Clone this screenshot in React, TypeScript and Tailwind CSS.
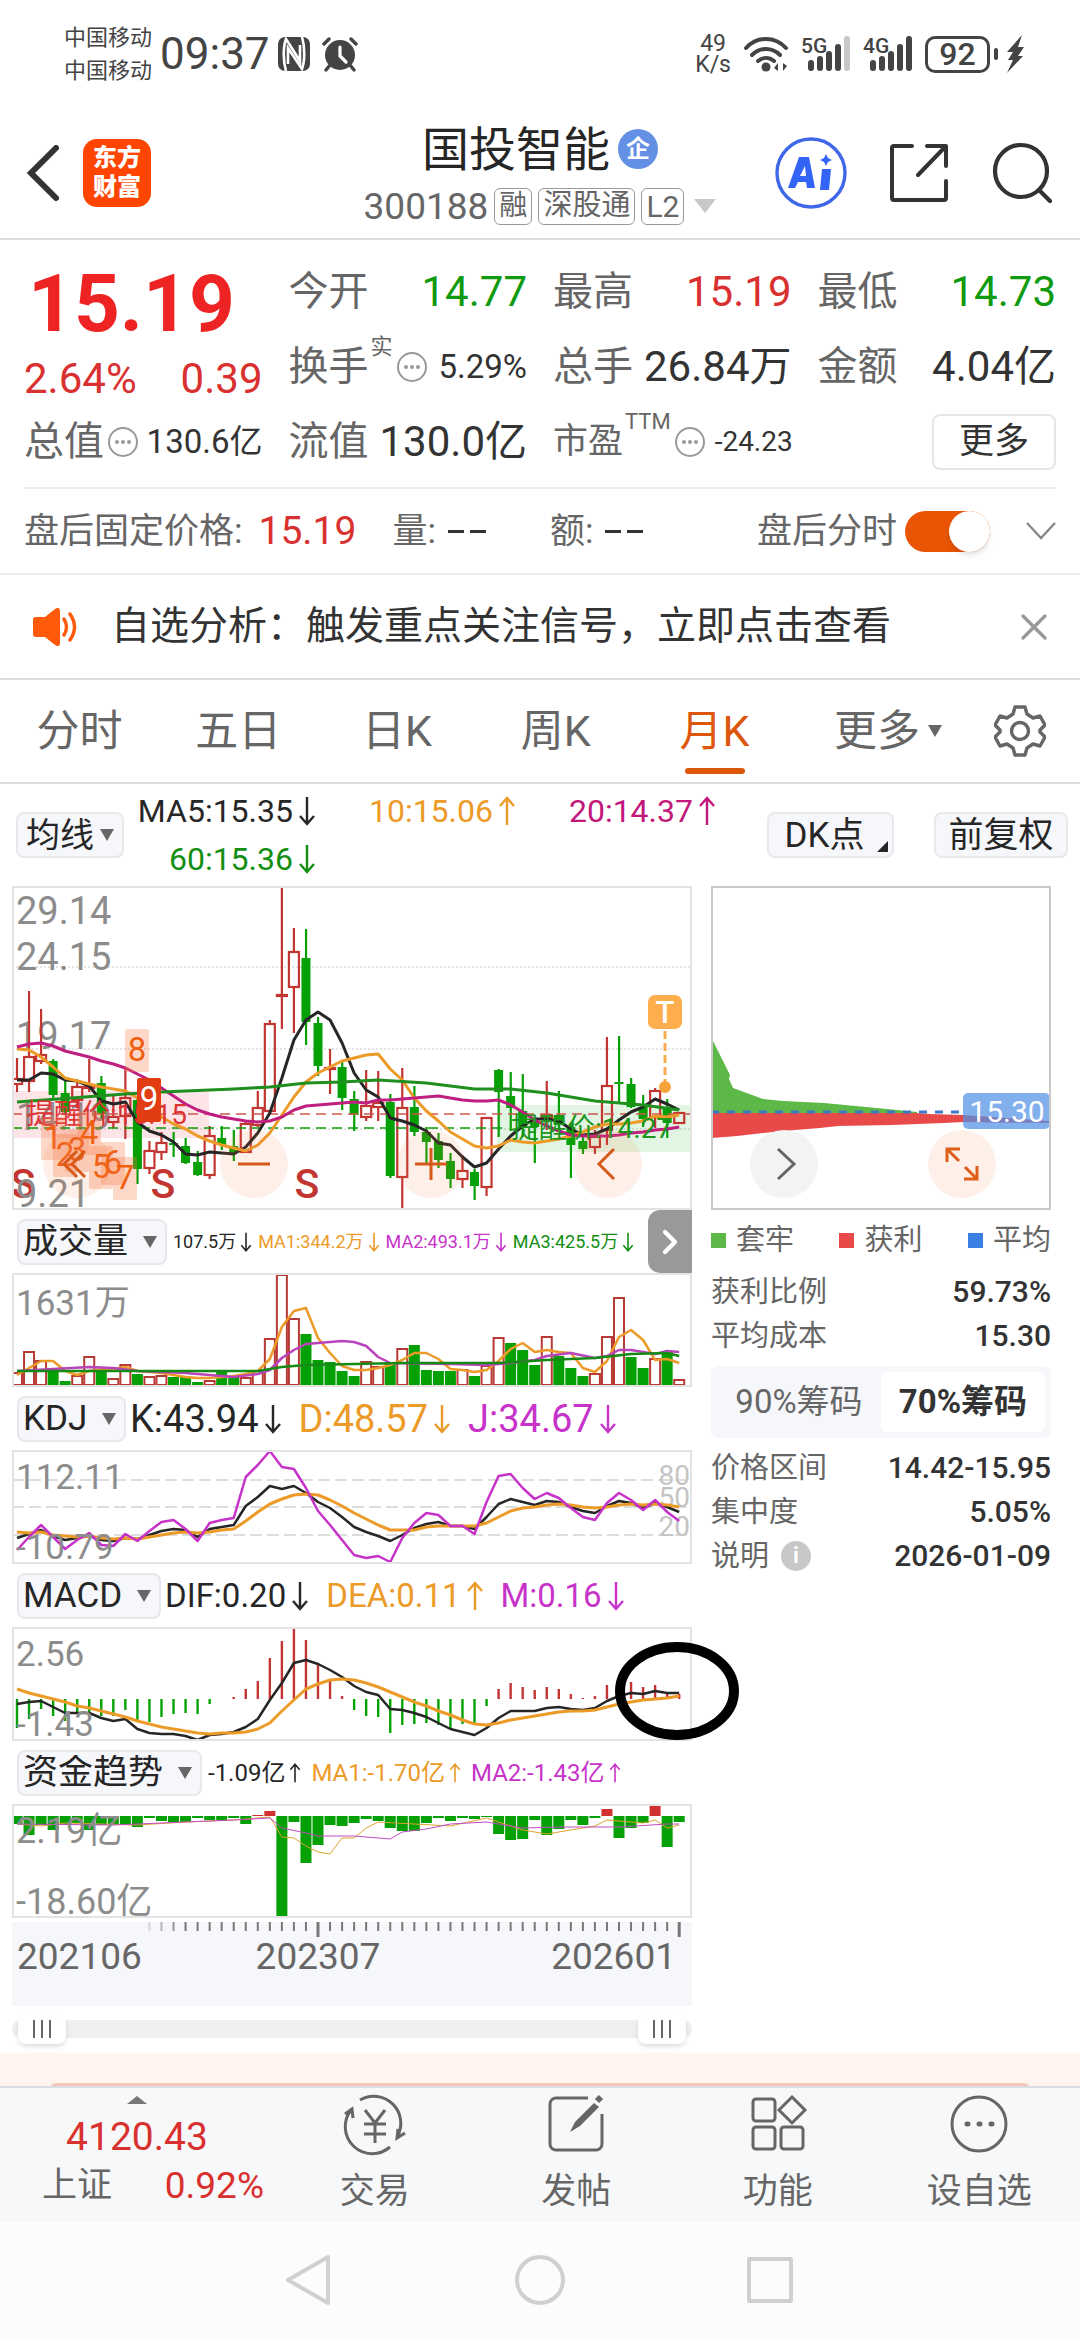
import type { ReactNode } from 'react';
import { ChevronRight, X } from 'lucide-react';

const RED = '#c23531';
const GREEN = '#05a005';
const ORANGE = '#ec9a28';
const PURPLE = '#c733c9';
const BLACK = '#262626';

// x of the n-th month on every chart of the left column
const STEP = 12.04;
const px = (i: number) => 5 + i * STEP;

// high, body top, body bottom, low, rising
const candles: [number, number, number, number, number][] = [
  [172, 193, 198, 206, 1], [105, 171, 195, 206, 1], [123, 169, 175, 178, 1], [173, 175, 209, 212, 0],
  [194, 207, 226, 229, 0], [196, 201, 214, 222, 1], [173, 201, 202, 206, 1], [190, 197, 228, 232, 0],
  [210, 231, 236, 242, 1], [182, 212, 230, 253, 1], [212, 214, 283, 298, 0], [255, 265, 282, 288, 1],
  [246, 257, 266, 274, 1], [246, 257, 259, 271, 0], [252, 260, 277, 278, 0], [265, 276, 289, 290, 0],
  [240, 250, 289, 293, 1], [240, 252, 259, 264, 0], [244, 260, 267, 275, 0], [236, 238, 266, 267, 1],
  [205, 222, 239, 241, 1], [134, 138, 225, 227, 1], [0, 109, 110, 143, 1], [42, 66, 101, 147, 1],
  [43, 72, 136, 159, 0], [131, 137, 180, 190, 0], [163, 182, 183, 208, 1], [176, 181, 212, 224, 0],
  [205, 213, 229, 245, 0], [184, 220, 231, 235, 1], [185, 217, 221, 235, 1], [208, 216, 290, 292, 0],
  [182, 222, 291, 325, 1], [200, 221, 246, 250, 0], [241, 246, 256, 277, 0], [247, 255, 274, 282, 0],
  [267, 275, 293, 302, 0], [269, 285, 293, 302, 1], [283, 286, 300, 314, 0], [231, 232, 301, 310, 1],
  [183, 184, 206, 251, 0], [186, 210, 222, 245, 0], [188, 225, 242, 251, 0], [232, 236, 241, 277, 0],
  [195, 229, 232, 244, 1], [205, 230, 239, 246, 0], [237, 241, 259, 292, 0], [251, 255, 263, 268, 0],
  [244, 251, 261, 268, 1], [151, 200, 244, 259, 1], [150, 196, 198, 217, 0], [192, 198, 221, 222, 0],
  [209, 221, 233, 241, 0], [202, 205, 231, 242, 1], [213, 221, 237, 252, 0], [226, 227, 237, 237, 1],
];

const ma5 = [194, 194, 187, 188, 194, 195, 200, 215, 218, 216, 236, 245, 249, 256, 268, 269, 266, 267, 268, 261, 247, 227, 192, 154, 134, 126, 134, 157, 187, 204, 211, 232, 235, 239, 245, 257, 259, 271, 281, 277, 263, 250, 240, 233, 233, 235, 243, 249, 248, 243, 234, 226, 221, 213, 218, 224];
const ma10 = [163, 164, 171, 181, 192, 195, 198, 201, 203, 205, 212, 222, 231, 238, 243, 250, 255, 259, 262, 265, 259, 247, 229, 211, 196, 187, 181, 175, 172, 169, 168, 183, 194, 212, 225, 235, 246, 253, 260, 262, 260, 254, 256, 257, 255, 253, 250, 246, 241, 238, 238, 237, 235, 230, 231, 229];
const ma20 = [161, 158, 157, 160, 165, 168, 171, 175, 178, 182, 188, 194, 202, 210, 218, 224, 228, 231, 233, 235, 236, 235, 231, 224, 220, 219, 218, 217, 216, 217, 214, 214, 213, 212, 211, 210, 212, 214, 215, 215, 214, 219, 226, 234, 240, 245, 249, 250, 250, 250, 249, 247, 246, 244, 243, 241];
const ma60: [number, number][] = [[0, 216], [9, 208], [12, 206], [18, 203], [21, 201], [24, 197], [27, 196], [30, 194], [34, 197], [38, 203], [41, 203], [44, 207], [48, 215], [52, 219], [55, 224]];

const volTops = [99, 78, 87, 96, 108, 102, 83, 96, 105, 91, 101, 103, 102, 104, 104, 109, 107, 98, 103, 104, 97, 65, 1, 45, 61, 87, 89, 98, 103, 88, 93, 90, 75, 72, 97, 98, 98, 96, 103, 92, 64, 70, 77, 92, 63, 83, 95, 103, 100, 63, 24, 84, 95, 85, 78, 106];
const volDown = [3, 4, 7, 10, 13, 14, 15, 17, 18, 24, 25, 26, 27, 28, 31, 33, 34, 35, 36, 38, 41, 42, 43, 45, 46, 47, 51, 52, 54];
const volMa1 = [102, 95, 88, 88, 98, 102, 98, 96, 96, 94, 98, 99, 100, 102, 104, 105, 105, 104, 103, 101, 98, 86, 54, 38, 35, 65, 80, 93, 97, 97, 95, 92, 87, 80, 80, 86, 96, 97, 99, 97, 88, 76, 70, 79, 77, 79, 80, 95, 99, 88, 64, 57, 67, 87, 86, 90];
const volMa2: [number, number][] = [[0, 98], [6, 94], [8, 95], [10, 98], [14, 100], [16, 102], [18, 104], [20, 101], [21, 97], [22, 85], [23, 77], [24, 71], [26, 69], [27, 68], [28, 69], [29, 73], [30, 84], [31, 90], [36, 91], [39, 92], [41, 90], [43, 87], [44, 83], [46, 80], [48, 85], [49, 83], [50, 77], [51, 77], [53, 81], [54, 78], [55, 79]];
const volMa3: [number, number][] = [[0, 98], [20, 98], [22, 94], [24, 92], [32, 90], [40, 90], [44, 87], [48, 85], [51, 81], [54, 80], [55, 83]];

const kLine = [88, 84, 80, 86, 90, 88, 86, 90, 91, 88, 89, 85, 81, 79, 80, 87, 79, 77, 75, 56, 47, 36, 39, 36, 43, 52, 58, 67, 77, 82, 86, 91, 85, 78, 74, 72, 76, 76, 79, 67, 54, 49, 52, 55, 51, 52, 57, 61, 63, 56, 51, 53, 58, 53, 57, 62];
const dLine = [82, 83, 82, 85, 86, 87, 86, 88, 89, 88, 89, 87, 85, 83, 82, 83, 82, 80, 79, 71, 62, 54, 49, 45, 44, 45, 50, 56, 63, 69, 75, 80, 80, 80, 77, 76, 76, 76, 76, 73, 67, 61, 58, 57, 55, 54, 55, 57, 58, 57, 55, 54, 55, 54, 55, 57];
const jLine = [100, 87, 75, 87, 99, 90, 83, 95, 96, 84, 91, 81, 72, 70, 79, 91, 73, 70, 68, 27, 15, 1, 17, 19, 38, 61, 75, 90, 105, 108, 106, 112, 88, 73, 63, 65, 76, 76, 84, 52, 26, 24, 38, 49, 43, 48, 58, 67, 70, 53, 43, 50, 60, 50, 62, 71];

const macdBars = [101, 92, 82, 89, 94, 87, 88, 89, 89, 83, 95, 95, 90, 87, 86, 87, 77, 72, 70, 62, 54, 31, 14, 0, 13, 36, 53, 69, 83, 89, 90, 106, 98, 97, 96, 98, 102, 97, 96, 79, 62, 56, 60, 63, 60, 62, 67, 71, 69, 58, 54, 55, 60, 58, 66, 67];
const dif = [77, 75, 74, 80, 86, 86, 86, 91, 94, 92, 102, 106, 107, 107, 109, 113, 108, 107, 105, 100, 92, 73, 56, 36, 33, 37, 43, 50, 59, 65, 68, 82, 83, 86, 90, 96, 102, 105, 108, 101, 91, 84, 84, 84, 81, 80, 82, 83, 81, 74, 69, 66, 67, 64, 66, 66];
const dea = [62, 66, 69, 72, 75, 79, 81, 84, 87, 90, 94, 97, 100, 102, 104, 106, 107, 106, 106, 105, 102, 96, 84, 73, 62, 57, 53, 52, 53, 56, 60, 65, 70, 75, 79, 84, 88, 93, 97, 98, 96, 93, 91, 89, 87, 85, 84, 84, 83, 80, 77, 75, 73, 72, 71, 69];

const fundBars = [20, 31, 21, 26, 20, 19, 26, 21, 20, 21, 23, 14, 17, 18, 18, 14, 16, 16, 14, 20, 11, 7, 113, 18, 59, 41, 21, 22, 19, 15, 17, 24, 27, 27, 19, 14, 17, 14, 15, 13, 30, 36, 35, 16, 31, 25, 16, 21, 14, 5, 34, 24, 19, 0, 43, 18];
const fundMa1: [number, number][] = [[0, 20], [2, 22], [4, 19], [10, 21], [14, 18], [18, 16], [21, 13], [22, 33], [23, 34], [24, 42], [25, 48], [26, 50], [27, 34], [28, 34], [29, 24], [30, 18], [33, 20], [36, 22], [39, 14], [40, 18], [42, 26], [44, 30], [46, 26], [48, 22], [49, 16], [52, 19], [53, 16], [54, 24], [55, 21]];
const fundMa2: [number, number][] = [[0, 20], [8, 21], [12, 19], [18, 16], [21, 14], [22, 24], [24, 29], [25, 32], [28, 32], [31, 35], [32, 28], [34, 25], [36, 20], [39, 18], [42, 24], [45, 23], [50, 23], [54, 20], [55, 20]];

// nine-turn counters under / over the candles: digit, box left, box top
const turns: [string, number, number][] = [
  ['1', 29, 231], ['2', 41, 248], ['3', 53, 243], ['4', 65, 226], ['5', 77, 260], ['6', 89, 256], ['7', 101, 271], ['8', 113, 143],
];

function Line({ data, color, width = 2.5 }: { data: number[] | [number, number][]; color: string; width?: number }) {
  const points = data.map((d, i) => (Array.isArray(d) ? `${px(d[0])},${d[1]}` : `${px(i)},${d}`)).join(' ');
  return <polyline points={points} fill="none" stroke={color} strokeWidth={width} strokeLinejoin="round" />;
}

function Chart({ height, label, children }: { height: number; label: string; children: ReactNode }) {
  return (
    <svg viewBox={`0 0 680 ${height}`} className="block w-full" role="img" aria-label={label}>
      {children}
      <rect x="1" y="1" width="678" height={height - 2} fill="none" stroke="#e3e3e3" strokeWidth="2" />
    </svg>
  );
}

function Arrow({ up, small }: { up?: boolean; small?: boolean }) {
  return (
    <svg viewBox="0 0 18 32" className={small ? 'h-6 w-3 shrink-0' : 'h-8 w-5 shrink-0'} fill="none" stroke="currentColor" strokeWidth="2.4">
      {up ? <path d="M9 30V3M2 11l7-8 7 8" /> : <path d="M9 2v27M2 21l7 8 7-8" />}
    </svg>
  );
}

function Reading({ text, color, up, small }: { text: string; color: string; up?: boolean; small?: boolean }) {
  return (
    <span className={`flex items-center gap-1 whitespace-nowrap ${color}`}>
      {text}
      <Arrow up={up} small={small} />
    </span>
  );
}

function Picker({ name, tight }: { name: string; tight?: boolean }) {
  return (
    <div className="relative flex h-[46px] shrink-0 items-center rounded-lg border-2 border-[#e6e8ec] bg-[#f6f7fa]">
      <select
        aria-label={name}
        className={`h-full appearance-none bg-transparent leading-none text-[#262626] outline-none ${tight ? 'pl-2 pr-7 text-[34px]' : 'pl-1 pr-9 text-[35px]'}`}
      >
        <option>{name}</option>
      </select>
      <svg viewBox="0 0 14 12" className="pointer-events-none absolute right-2 h-3 w-3.5" fill="#666">
        <path d="M0 0h14L7 12z" />
      </svg>
    </div>
  );
}

function More() {
  return (
    <svg viewBox="0 0 30 30" className="ml-1 size-[30px] shrink-0" fill="none" stroke="#999" strokeWidth="2">
      <circle cx="15" cy="15" r="14" />
      <g fill="#999" stroke="none">
        <circle cx="9" cy="15" r="2" />
        <circle cx="15" cy="15" r="2" />
        <circle cx="21" cy="15" r="2" />
      </g>
    </svg>
  );
}

function Quote({ label, sup, info, value, color = 'text-[#333]', size = 'text-[42px]', labelSize = 'text-[40px]' }: {
  label: string; sup?: string; info?: boolean; value: string; color?: string; size?: string; labelSize?: string;
}) {
  return (
    <div className="flex h-[75px] items-center whitespace-nowrap leading-none">
      <dt className={`flex items-center text-[#666] ${labelSize}`}>
        {label}
        {sup && <sup className="-top-5 ml-0.5 text-[22px] leading-none">{sup}</sup>}
        {info && <More />}
      </dt>
      <dd className={`${info && sup === 'TTM' ? 'ml-2.5' : 'ml-auto'} ${size} ${color}`}>{value}</dd>
    </div>
  );
}

function StatusBar() {
  return (
    <div className="flex h-[108px] items-center justify-between pl-16 pr-14 text-[#444]">
      <div className="flex items-center gap-2">
        <div className="text-[22px] leading-[33px]">
          <div>中国移动</div>
          <div>中国移动</div>
        </div>
        <div className="text-[44px] leading-none">09:37</div>
        <svg viewBox="0 0 32 34" className="h-[34px] w-8">
          <rect width="32" height="34" rx="7" fill="#444" />
          <path d="M8 34C5 24 5 10 8 2l14 22V8M24 0c3 10 3 24 0 32L10 11v16" fill="none" stroke="#fff" strokeWidth="2.6" />
        </svg>
        <svg viewBox="0 0 36 36" className="ml-1 size-9" stroke="#444" strokeLinecap="round">
          <circle cx="18" cy="19" r="15" fill="#444" stroke="none" />
          <path d="M2 8l5-5M34 8l-5-5" strokeWidth="3.4" />
          <path d="M8 29l-4 5M28 29l4 5" strokeWidth="3.4" />
          <path d="M18 11v9l6 6" fill="none" stroke="#fff" strokeWidth="3.2" />
        </svg>
      </div>
      <div className="flex items-center gap-3">
        <div className="text-center text-[23px] leading-[21px]">
          <div>49</div>
          <div>K/s</div>
        </div>
        <svg viewBox="0 0 46 36" className="h-9 w-[46px]" fill="none" stroke="#444" strokeWidth="4" strokeLinecap="round">
          <path d="M3 12c11-12 29-12 40 0M9 19c8-8 20-8 28 0M15 25c5-4 11-4 16 0" />
          <circle cx="23" cy="31" r="4.5" fill="#444" stroke="none" />
          <path d="M31 32l4-5v8zM44 30l-4-3v8z" fill="#444" stroke="none" />
        </svg>
        <Signal name="5G" bars={4} />
        <Signal name="4G" bars={5} />
        <div className="flex items-center gap-1">
          <div className="flex h-[37px] w-[65px] items-center justify-center rounded-[10px] border-[3px] border-[#444] text-[32px] font-medium leading-none">92</div>
          <div className="h-3 w-1 rounded-sm bg-[#444]" />
          <svg viewBox="0 0 18 38" className="ml-1 h-[38px] w-[18px]" fill="#444">
            <path d="M16 0L1 17h6l-5 8h5L1 38 17 21h-5l6-9h-6z" />
          </svg>
        </div>
      </div>
    </div>
  );
}

function Signal({ name, bars }: { name: string; bars: number }) {
  return (
    <svg viewBox="0 0 50 36" className="h-9 w-[50px] overflow-visible">
      <text x="0" y="17" fontSize="21" fontWeight="500" fill="#444">{name}</text>
      {[11, 15, 20, 27, 35].map((h, i) => (
        <rect key={h} x={7 + i * 9} y={35 - h} width="6" height={h} rx="3" fill={i < bars ? '#444' : '#c8c8c8'} />
      ))}
    </svg>
  );
}

function Header() {
  return (
    <header className="grid h-[132px] grid-cols-[1fr_auto_1fr] items-center border-b-2 border-[#dcdcdc] px-[27px]">
      <div className="flex items-center gap-6">
        <button aria-label="返回">
          <svg viewBox="0 0 32 56" className="h-14 w-8" fill="none" stroke="#333" strokeWidth="6" strokeLinecap="round">
            <path d="M29 3L4 28l25 25" />
          </svg>
        </button>
        <a href="#home" className="flex size-[68px] flex-col items-center justify-center rounded-[14px] bg-[#ff4500] text-[24px] font-black leading-[29px] text-white">
          <span>东方</span>
          <span>财富</span>
        </a>
      </div>
      <div className="flex flex-col items-center gap-2 whitespace-nowrap">
        <h1 className="flex h-[58px] items-center gap-2 text-[47px] leading-none text-[#262626]">
          国投智能
          <span className="flex size-10 items-center justify-center rounded-full bg-[#6390e4] text-[24px] font-bold leading-none text-white">企</span>
        </h1>
        <button className="flex h-10 items-center gap-1.5 text-[#666]">
          <span className="text-[37px] leading-none">300188</span>
          <span className="flex h-[37px] items-center rounded-md border border-[#999] px-1 text-[28px]">融</span>
          <span className="flex h-[37px] items-center rounded-md border border-[#999] px-1 text-[29px]">深股通</span>
          <span className="flex h-[37px] items-center rounded-md border border-[#999] px-1 text-[30px]">L2</span>
          <svg viewBox="0 0 22 14" className="ml-1 h-3.5 w-[22px]" fill="#c8c8c8">
            <path d="M0 0h22L11 14z" />
          </svg>
        </button>
      </div>
      <div className="flex items-center justify-end gap-[42px]">
        <button aria-label="AI">
          <svg viewBox="0 0 72 72" className="size-[72px]">
            <circle cx="36" cy="36" r="34" fill="#fff" stroke="#3f68e8" strokeWidth="3.4" />
            <path d="M24 20h10l6 31h-8l-1-6h-8l-3 6h-7zM30 29l-5 10h6z" fill="#3464f5" fillRule="evenodd" />
            <path d="M47 32h9l-2 21h-9zM51 17l2 4 4 2-4 2-2 4-2-4-4-2 4-2z" fill="#3464f5" />
          </svg>
        </button>
        <button aria-label="分享">
          <svg viewBox="0 0 60 60" className="size-[60px]" fill="none" stroke="#333" strokeWidth="4" strokeLinecap="round" strokeLinejoin="round">
            <path d="M23 3H5a2 2 0 0 0-2 2v50a2 2 0 0 0 2 2h50a2 2 0 0 0 2-2V38M38 3h19v20M57 3L29 32" />
          </svg>
        </button>
        <button aria-label="搜索">
          <svg viewBox="0 0 62 62" className="size-[62px]" fill="none" stroke="#333" strokeWidth="4.2" strokeLinecap="round">
            <circle cx="30" cy="29" r="26" />
            <path d="M48 48l11 11" />
          </svg>
        </button>
      </div>
    </header>
  );
}

function QuoteBoard() {
  return (
    <section className="px-6">
      <dl className="grid h-[249px] grid-cols-4 gap-x-[26px] border-b-2 border-[#eee] pt-3.5">
        <div className="leading-none">
          <dd className="flex h-[100px] items-center pl-1 text-[80px] font-bold text-[#ee2424]">15.19</dd>
          <dd className="flex h-[50px] items-center justify-between text-[42px] text-[#d93030]">
            <span>2.64%</span>
            <span>0.39</span>
          </dd>
          <Quote label="总值" info value="130.6亿" size="text-[33px]" />
        </div>
        <div>
          <Quote label="今开" value="14.77" color="text-[#0f9a0f]" />
          <Quote label="换手" sup="实" info value="5.29%" size="text-[33px]" />
          <Quote label="流值" value="130.0亿" />
        </div>
        <div>
          <Quote label="最高" value="15.19" color="text-[#d93030]" />
          <Quote label="总手" value="26.84万" />
          <Quote label="市盈" sup="TTM" info value="-24.23" size="text-[28px]" labelSize="text-[35px]" />
        </div>
        <div>
          <Quote label="最低" value="14.73" color="text-[#0f9a0f]" />
          <Quote label="金额" value="4.04亿" />
          <div className="flex h-[75px] items-center justify-end">
            <button className="h-14 w-[124px] rounded-lg border-2 border-[#e6e6e6] text-[35px] leading-none text-[#333]">更多</button>
          </div>
        </div>
      </dl>
    </section>
  );
}

function Blank() {
  return (
    <span className="ml-3 flex gap-1.5" aria-label="无">
      <i className="h-[3px] w-4 bg-[#333]" />
      <i className="h-[3px] w-4 bg-[#333]" />
    </span>
  );
}

function AfterHours() {
  return (
    <section className="flex h-[86px] items-center whitespace-nowrap border-b-2 border-[#eee] px-6 text-[35px] leading-none text-[#666]">
      <span>盘后固定价格:</span>
      <span className="ml-4 text-[39px] text-[#d93030]">15.19</span>
      <span className="ml-9">量:</span>
      <Blank />
      <span className="ml-16">额:</span>
      <Blank />
      <label className="ml-auto flex items-center gap-2">
        盘后分时
        <input
          type="checkbox"
          role="switch"
          defaultChecked
          className="h-[41px] w-[85px] appearance-none rounded-full bg-gray-300 before:block before:size-[41px] before:rounded-full before:bg-white before:shadow-md checked:bg-[#e95504] checked:before:ml-11"
        />
      </label>
      <button aria-label="展开" className="ml-9">
        <svg viewBox="0 0 30 18" className="h-[18px] w-[30px]" fill="none" stroke="#888" strokeWidth="2.4">
          <path d="M1 1l14 15L29 1" />
        </svg>
      </button>
    </section>
  );
}

function Notice() {
  return (
    <section className="flex h-[105px] items-center border-b-2 border-[#dcdcdc] pl-[33px] pr-6 text-[39px] leading-none text-[#333]">
      <svg viewBox="0 0 46 38" className="mr-8 h-[38px] w-[46px] shrink-0" fill="#ff5a0a">
        <path d="M3 9h9L22 1c3-2 5-1 5 2v32c0 3-2 4-5 2l-10-8H3c-2 0-3-1-3-3V12c0-2 1-3 3-3z" />
        <path d="M31 11q5 8 0 16M37 6q9 13 0 26" fill="none" stroke="#ff5a0a" strokeWidth="3.4" strokeLinecap="round" />
      </svg>
      <p className="whitespace-nowrap">自选分析：触发重点关注信号，立即点击查看</p>
      <button aria-label="关闭" className="ml-auto text-[#999]">
        <X className="size-11" strokeWidth={1.8} />
      </button>
    </section>
  );
}

const tabs = ['分时', '五日', '日K', '周K', '月K'];

function PeriodTabs() {
  return (
    <nav className="grid h-[104px] grid-cols-[repeat(5,1fr)_188px_76px] items-center border-b-2 border-[#dcdcdc] pr-[22px] text-[43px] leading-none text-[#666]">
      {tabs.map(tab => (
        <button key={tab} className={`relative h-full ${tab === '月K' ? 'text-[#dc560c]' : ''}`}>
          {tab}
          {tab === '月K' && <span className="absolute bottom-2 left-1/2 h-1.5 w-[60px] -translate-x-1/2 rounded-full bg-[#dc560c]" />}
        </button>
      ))}
      <button className="flex items-center justify-center gap-2">
        更多
        <svg viewBox="0 0 14 12" className="h-3 w-3.5" fill="#666"><path d="M0 0h14L7 12z" /></svg>
      </button>
      <button aria-label="设置" className="flex justify-center">
        <svg viewBox="0 0 52 52" className="size-[52px]" fill="none" stroke="#666" strokeWidth="3.4" strokeLinejoin="round">
          <path d="M21 2h10l2 7 6 4 7-2 5 9-5 5v2l5 5-5 9-7-2-6 4-2 7H21l-2-7-6-4-7 2-5-9 5-5v-2l-5-5 5-9 7 2 6-4z" />
          <circle cx="26" cy="26" r="8.5" />
        </svg>
      </button>
    </nav>
  );
}

function AverageRow() {
  return (
    <section className="flex h-[102px] items-center gap-2 pl-4 pr-3 leading-none">
      <Picker name="均线" tight />
      <div className="grid grid-cols-[185px_200px_200px] justify-items-end text-[32px] leading-[48px]">
        <Reading text="MA5:15.35" color="text-[#262626]" />
        <Reading text="10:15.06" color="text-[#ec9a28]" up />
        <Reading text="20:14.37" color="text-[#c2187c]" up />
        <Reading text="60:15.36" color="text-[#128f12]" />
      </div>
      <div className="ml-auto flex gap-10 text-[35px] text-[#262626]">
        <button className="relative h-[46px] w-[127px] rounded-lg border-2 border-[#e6e8ec] bg-[#f6f7fa] pr-3 leading-none">
          DK点
          <svg viewBox="0 0 11 11" className="absolute bottom-1 right-1 size-[11px]" fill="#262626"><path d="M11 0v11H0z" /></svg>
        </button>
        <button className="h-[46px] w-[134px] rounded-lg border-2 border-[#e6e8ec] bg-[#f6f7fa] leading-none">前复权</button>
      </div>
    </section>
  );
}

function PriceChart() {
  return (
    <div className="relative">
      <Chart height={324} label="月K线">
        {[81, 163, 243].map(y => (
          <path key={y} d={`M0 ${y}H680`} stroke="#c8c8c8" strokeWidth="1" strokeDasharray="2 2" />
        ))}
        <g fill="#8c8c8c" fontSize="38">
          <text x="4" y="38">29.14</text>
          <text x="4" y="84">24.15</text>
          <text x="4" y="163">19.17</text>
          <text x="4" y="244">14.19</text>
        </g>
        <rect x="0" y="205" width="197" height="47" fill="#f44b5c" opacity="0.15" />
        <rect x="485" y="219" width="195" height="47" fill="#20b020" opacity="0.13" />
        {candles.map(([high, top, bottom, low, rising], i) =>
          rising ? (
            <g key={i} stroke={RED} strokeWidth="2.2" fill="none">
              <path d={`M${px(i)} ${high}V${top}M${px(i)} ${bottom}V${low}`} />
              <rect x={px(i) - 5} y={top} width="10" height={bottom - top} />
            </g>
          ) : (
            <g key={i} fill={GREEN}>
              <rect x={px(i) - 1} y={high} width="2.2" height={low - high} />
              <rect x={px(i) - 4.5} y={top} width="9" height={bottom - top} />
            </g>
          ),
        )}
        <path d="M0 228H680" stroke="#d0574e" strokeWidth="1.3" strokeDasharray="10 6" />
        <path d="M0 242H490" stroke={GREEN} strokeWidth="1.3" strokeDasharray="10 6" />
        <Line data={ma5} color={BLACK} width={3} />
        <Line data={ma10} color={ORANGE} width={3} />
        <Line data={ma20} color="#bf2080" width={3} />
        <Line data={ma60} color="#1f8f1f" width={3} />
        <text x="14" y="238" fontSize="28" fill="#dd3434">提醒价:15.15</text>
        <text x="499" y="252" fontSize="28" fill="#1c951c">提醒价:14.27</text>
        <g fill={RED} fontSize="41" fontWeight="500" textAnchor="middle">
          <text x="11" y="312">S</text>
          <text x="151" y="312">S</text>
          <text x="295" y="312">S</text>
        </g>
        <text x="4" y="321" fontSize="38" fill="#8c8c8c">9.21</text>
        {turns.map(([n, x, y]) => (
          <g key={n}>
            <rect x={x} y={y} width="24" height="43" rx="2" fill="#fa7a45" opacity="0.3" />
            <text x={x + 12} y={y + 32} fontSize="33" fill="#ee5f10" textAnchor="middle">{n}</text>
          </g>
        ))}
        <rect x="125" y="192" width="24" height="44" rx="2" fill="#e23d12" />
        <text x="137" y="224" fontSize="33" fill="#fff" textAnchor="middle">9</text>
        <rect x="636" y="109" width="34" height="34" rx="7" fill="#ffae4d" />
        <text x="653" y="137" fontSize="31" fontWeight="500" fill="#fff" textAnchor="middle">T</text>
        <path d="M653 145V198" stroke="#f5ad4f" strokeWidth="3" strokeDasharray="8 4" />
        <circle cx="653" cy="201" r="6" fill="#f7a33c" />
      </Chart>
      <div className="absolute bottom-3 left-[31px] right-[50px] flex justify-between text-[#d65a1a]">
        <RoundButton label="最早" path="M34 21L21 34l13 13M42 21L29 34l13 13" />
        <RoundButton label="缩小" path="M18 34h32" />
        <RoundButton label="放大" path="M18 34h32M34 18v32" />
        <RoundButton label="向前" path="M40 19L25 34l15 15" />
      </div>
    </div>
  );
}

function RoundButton({ label, path, tone = 'bg-[#f97a40]/12' }: { label: string; path: string; tone?: string }) {
  return (
    <button aria-label={label} className={`size-[68px] rounded-full ${tone}`}>
      <svg viewBox="0 0 68 68" className="size-full" fill="none" stroke="currentColor" strokeWidth="3">
        <path d={path} />
      </svg>
    </button>
  );
}

function IndicatorRow({ name, size, children }: { name: string; size: string; children: ReactNode }) {
  return (
    <div className={`flex h-[63px] items-center pl-[5px] leading-none ${size}`}>
      <Picker name={name} />
      {children}
    </div>
  );
}

function VolumeChart() {
  return (
    <Chart height={114} label="成交量">
      <text x="4" y="42" fontSize="35" fill="#8c8c8c">1631万</text>
      {volTops.map((top, i) =>
        volDown.includes(i) ? (
          <rect key={i} x={px(i) - 5.5} y={top} width="11" height={112 - top} fill={GREEN} />
        ) : (
          <rect key={i} x={px(i) - 5} y={top + 1} width="10" height={111 - top} fill="#fff" stroke="#b83a34" strokeWidth="2" />
        ),
      )}
      <Line data={volMa1} color={ORANGE} />
      <Line data={volMa2} color="#b944bb" />
      <Line data={volMa3} color="#168a16" />
    </Chart>
  );
}

function KdjChart() {
  return (
    <Chart height={114} label="KDJ">
      {[30, 57, 85].map(y => (
        <path key={y} d={`M0 ${y}H680`} stroke="#d2d2d2" strokeWidth="1.4" strokeDasharray="12 5" />
      ))}
      <g fill="#c4c4c4" fontSize="28" textAnchor="end">
        <text x="678" y="35">80</text>
        <text x="678" y="57">50</text>
        <text x="678" y="86">20</text>
      </g>
      <Line data={kLine} color={BLACK} />
      <Line data={dLine} color={ORANGE} width={3} />
      <Line data={jLine} color={PURPLE} />
      <text x="4" y="39" fontSize="35" fill="#8c8c8c">112.11</text>
      <text x="4" y="109" fontSize="35" fill="#8c8c8c">-10.79</text>
    </Chart>
  );
}

function MacdChart() {
  return (
    <Chart height={114} label="MACD">
      {macdBars.map((y, i) => (
        <path key={i} d={`M${px(i)} 72V${y}`} stroke={y > 72 ? GREEN : RED} strokeWidth="2.4" />
      ))}
      <Line data={dif} color={BLACK} />
      <Line data={dea} color={ORANGE} width={3} />
      <text x="4" y="39" fontSize="35" fill="#8c8c8c">2.56</text>
      <text x="4" y="109" fontSize="35" fill="#8c8c8c">-1.43</text>
    </Chart>
  );
}

function FundChart() {
  return (
    <Chart height={114} label="资金趋势">
      {fundBars.map((y, i) => (
        <rect key={i} x={px(i) - 5.5} y={Math.min(y, 12)} width="11" height={Math.abs(y - 12)} fill={y > 12 ? GREEN : '#d03030'} />
      ))}
      <Line data={fundMa1} color="#dda32c" width={1} />
      <Line data={fundMa2} color="#c04cc4" width={1} />
      <text x="4" y="39" fontSize="36" fill="#8c8c8c">2.19亿</text>
      <text x="4" y="110" fontSize="36" fill="#8c8c8c">-18.60亿</text>
    </Chart>
  );
}

const thumb =
  'pointer-events-none absolute inset-x-1.5 inset-y-0 appearance-none bg-transparent [&::-webkit-slider-thumb]:pointer-events-auto [&::-webkit-slider-thumb]:h-[30px] [&::-webkit-slider-thumb]:w-12 [&::-webkit-slider-thumb]:appearance-none [&::-webkit-slider-thumb]:rounded-lg [&::-webkit-slider-thumb]:bg-white [&::-webkit-slider-thumb]:bg-[repeating-linear-gradient(90deg,#666_0_2px,transparent_2px_8px)] [&::-webkit-slider-thumb]:bg-[length:18px_18px] [&::-webkit-slider-thumb]:bg-center [&::-webkit-slider-thumb]:bg-no-repeat [&::-webkit-slider-thumb]:shadow-md';

function TimeAxis() {
  return (
    <div>
      <svg viewBox="0 0 680 84" className="mt-1 block w-full bg-[#f6f7fa]" role="img" aria-label="时间轴">
        {Array.from({ length: 45 }, (_, n) => n + 11).map(i => (
          <path key={i} d={`M${px(i)} 0V${i === 25 || i === 55 ? 15 : 9}`} stroke="#777" strokeWidth={i === 25 || i === 55 ? 3 : 2} opacity={Math.min(1, (i - 10) / 4)} />
        ))}
        <g fill="#666" fontSize="37">
          <text x="5" y="47">202106</text>
          <text x={px(25)} y="47" textAnchor="middle">202307</text>
          <text x="664" y="47" textAnchor="end">202601</text>
        </g>
      </svg>
      <div className="relative mt-2 flex h-[30px] items-center">
        <div className="h-[18px] w-full rounded-full bg-[#efeff2]" />
        <input type="range" aria-label="开始月份" defaultValue={0} className={thumb} />
        <input type="range" aria-label="结束月份" defaultValue={100} className={thumb} />
      </div>
    </div>
  );
}

function ChipPanel() {
  return (
    <aside className="text-[29px] leading-[44px] text-[#666]">
      <div className="relative">
        <svg viewBox="0 0 340 324" className="block w-full" role="img" aria-label="筹码分布">
          <path d="M0 151L19 189l-1 4 4 9 30 11 20 2 41 2 21 2 21 2 21 2 30 3v2H0z" fill="#5cb947" />
          <path d="M0 227H206l13 1 33 1 87 6v2l-87-1-19 1-52 2-54 1-18 2-25 2-32 3-26 3-12 1-14 1z" fill="#e84a4a" />
          <path d="M0 226H250" stroke="#3d78c4" strokeWidth="3" strokeDasharray="8 8" />
          <rect x="252" y="207" width="87" height="36" rx="5" fill="#5092e6" opacity="0.72" />
          <text x="296" y="236" fontSize="30" fill="#fff" textAnchor="middle">15.30</text>
          <rect x="1" y="1" width="338" height="322" fill="none" stroke="#c9c9c9" strokeWidth="2" />
        </svg>
        <div className="absolute bottom-3 left-[39px] right-[55px] flex justify-between">
          <RoundButton label="向后" path="M28 19l16 15-16 15" tone="bg-[#f3f3f3]" />
          <span className="flex text-[#dd6018]">
            <RoundButton label="全屏" path="M19 32V19h13M19 19l12 12M49 36v13H36M49 49L37 37" tone="bg-[#fef0e8]" />
          </span>
        </div>
      </div>
      <div className="flex h-[60px] items-center justify-between">
        <span className="flex items-center gap-2.5"><i className="size-[15px] bg-[#5cb947]" />套牢</span>
        <span className="flex items-center gap-2.5"><i className="size-[15px] bg-[#e84a4a]" />获利</span>
        <span className="flex items-center gap-2.5"><i className="size-[15px] bg-[#3a80e2]" />平均</span>
      </div>
      <dl>
        <ChipRow label="获利比例" value="59.73%" />
        <ChipRow label="平均成本" value="15.30" />
      </dl>
      <div className="my-2 grid h-[72px] grid-cols-2 rounded-lg bg-[#f6f7fa] p-1.5 text-[33px]">
        <label className="flex items-center justify-center rounded-md has-checked:bg-white has-checked:font-bold has-checked:text-[#333]">
          <input type="radio" name="chips" className="sr-only" />90%筹码
        </label>
        <label className="flex items-center justify-center rounded-md has-checked:bg-white has-checked:font-bold has-checked:text-[#333]">
          <input type="radio" name="chips" defaultChecked className="sr-only" />70%筹码
        </label>
      </div>
      <dl>
        <ChipRow label="价格区间" value="14.42-15.95" />
        <ChipRow label="集中度" value="5.05%" />
        <ChipRow label="说明" value="2026-01-09" info />
      </dl>
    </aside>
  );
}

function ChipRow({ label, value, info }: { label: string; value: string; info?: boolean }) {
  return (
    <div className="flex justify-between">
      <dt className="flex items-center gap-3">
        {label}
        {info && <span className="flex size-[30px] items-center justify-center rounded-full bg-[#c8c8c8] text-[22px] font-bold leading-none text-white">i</span>}
      </dt>
      <dd className="text-[30px] font-medium text-[#333]">{value}</dd>
    </div>
  );
}

const actions: { name: string; icon: ReactNode }[] = [
  {
    name: '交易',
    icon: (
      <>
        <path d="M17 6a27 27 0 0 1 37 37M47 53A27 27 0 0 1 8 16M2 20l7-5 1 9M62 39l-8 5 1-9" />
        <path d="M22 16l10 13 10-13M21 30h22M21 40h22M32 29v20" />
      </>
    ),
  },
  {
    name: '发帖',
    icon: (
      <>
        <path d="M44 4H12a6 6 0 0 0-6 6v40a6 6 0 0 0 6 6h40a6 6 0 0 0 6-6V20" />
        <path d="M26 38l5-10L50 9l5 4-19 19z" fill="#666" stroke="none" />
        <path d="M53 7l4-4" strokeWidth="6" />
      </>
    ),
  },
  {
    name: '功能',
    icon: (
      <>
        <rect x="7" y="5" width="22" height="22" rx="3" />
        <rect x="7" y="33" width="22" height="22" rx="3" />
        <rect x="35" y="33" width="22" height="22" rx="3" />
        <path d="M46 3l13 13-13 13-13-13z" />
      </>
    ),
  },
  {
    name: '设自选',
    icon: (
      <>
        <circle cx="32" cy="30" r="27" />
        <path d="M20 30h1M32 30h1M44 30h1" strokeWidth="5" strokeLinecap="round" />
      </>
    ),
  },
];

function BottomBar() {
  return (
    <nav className="grid h-[136px] grid-cols-[274px_repeat(4,1fr)] border-t-2 border-[#dadde2] bg-[#f7f8fa] leading-none text-[#666]">
      <button className="flex flex-col items-center whitespace-nowrap pt-2">
        <svg viewBox="0 0 20 8" className="h-2 w-5" fill="#777"><path d="M10 0l10 8H0z" /></svg>
        <span className="mt-3.5 text-[39px] text-[#d93030]">4120.43</span>
        <span className="mt-2.5 flex w-full items-center justify-between pl-[42px] pr-2.5 text-[35px]">
          上证
          <span className="text-[37px] text-[#d93030]">0.92%</span>
        </span>
      </button>
      {actions.map(({ name, icon }) => (
        <button key={name} className="flex flex-col items-center pt-1.5">
          <svg viewBox="0 0 64 60" className="h-[60px] w-16 overflow-visible" fill="none" stroke="#666" strokeWidth="3">{icon}</svg>
          <span className="mt-5 text-[35px]">{name}</span>
        </button>
      ))}
    </nav>
  );
}

function SystemNav() {
  return (
    <div className="flex h-[116px] items-center justify-center gap-[178px] bg-[#fcfcfc]">
      <svg viewBox="0 0 52 52" className="size-[52px]" fill="none" stroke="#d0d0d0" strokeWidth="4" strokeLinejoin="round"><path d="M4 26L44 3v46z" /></svg>
      <svg viewBox="0 0 52 52" className="size-[52px]" fill="none" stroke="#d0d0d0" strokeWidth="4"><circle cx="26" cy="26" r="23" /></svg>
      <svg viewBox="0 0 52 52" className="size-[52px]" fill="none" stroke="#d0d0d0" strokeWidth="4" strokeLinejoin="round"><rect x="5" y="5" width="42" height="42" /></svg>
    </div>
  );
}

export default function App() {
  return (
    <div className="overflow-hidden bg-white font-['Roboto','Noto_Sans_CJK_SC',sans-serif]">
      <StatusBar />
      <Header />
      <QuoteBoard />
      <AfterHours />
      <Notice />
      <PeriodTabs />
      <AverageRow />

      <main className="grid grid-cols-[2fr_1fr] gap-x-[19px] pb-[9px] pl-3 pr-[29px]">
        <div className="min-w-0">
          <PriceChart />
          <div className="relative">
            <IndicatorRow name="成交量" size="text-[18px]">
              <div className="ml-1.5 flex gap-1.5">
                <Reading small text="107.5万" color="text-[#262626]" />
                <Reading small text="MA1:344.2万" color="text-[#ec9a28]" />
                <Reading small text="MA2:493.1万" color="text-[#c733c9]" />
                <Reading small text="MA3:425.5万" color="text-[#128f12]" />
              </div>
            </IndicatorRow>
            <button aria-label="下一组" className="absolute inset-y-0 right-0 flex w-11 items-center justify-center rounded-l-xl bg-[#999] text-white">
              <ChevronRight className="size-10" strokeWidth={2.6} />
            </button>
          </div>
          <VolumeChart />
          <IndicatorRow name="KDJ" size="text-[38px]">
            <div className="ml-1 flex gap-4">
              <Reading text="K:43.94" color="text-[#262626]" />
              <Reading text="D:48.57" color="text-[#ec9a28]" />
              <Reading text="J:34.67" color="text-[#c733c9]" />
            </div>
          </IndicatorRow>
          <KdjChart />
          <IndicatorRow name="MACD" size="text-[33px]">
            <div className="ml-1 flex gap-4">
              <Reading text="DIF:0.20" color="text-[#262626]" />
              <Reading text="DEA:0.11" color="text-[#ec9a28]" up />
              <Reading text="M:0.16" color="text-[#c733c9]" />
            </div>
          </IndicatorRow>
          <div className="relative">
            <MacdChart />
            <svg viewBox="0 0 126 100" className="absolute -right-12 bottom-0 h-[100px] w-[126px]" fill="none" stroke="#000" strokeWidth="10">
              <ellipse cx="63" cy="50" rx="57" ry="44" />
            </svg>
          </div>
          <IndicatorRow name="资金趋势" size="text-[24px]">
            <div className="ml-1.5 flex gap-2.5">
              <Reading small text="-1.09亿" color="text-[#262626]" up />
              <Reading small text="MA1:-1.70亿" color="text-[#ec9a28]" up />
              <Reading small text="MA2:-1.43亿" color="text-[#c733c9]" up />
            </div>
          </IndicatorRow>
          <FundChart />
          <TimeAxis />
        </div>
        <ChipPanel />
      </main>

      <div className="h-[33px] overflow-hidden bg-[#fff4ef] px-[49px] pt-[30px]">
        <div className="h-10 rounded-t-lg bg-[#f4c6bc]" />
      </div>
      <BottomBar />
      <SystemNav />
    </div>
  );
}
